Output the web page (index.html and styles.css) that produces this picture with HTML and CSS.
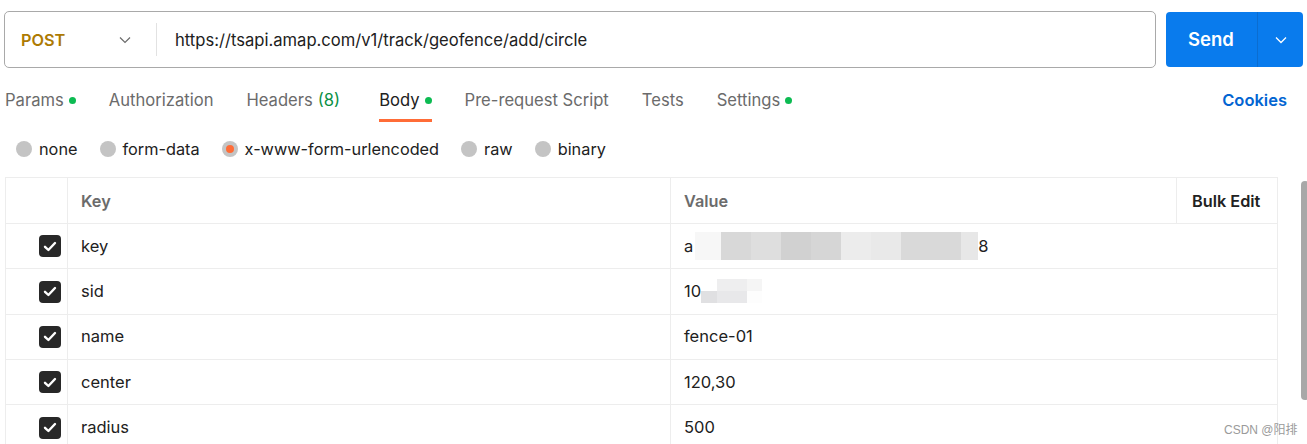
FILE: index.html
```html
<!DOCTYPE html>
<html lang="en">
<head>
<meta charset="utf-8">
<title>Request</title>
<link rel="stylesheet" href="styles.css">
</head>
<body>
<div class="page">
  <div class="topbar">
    <div class="urlbox">
      <div class="method">
        <span class="method-name">POST</span>
        <svg class="chev" width="12" height="8" viewBox="0 0 12 8"><path d="M1 1.5 L6 6.5 L11 1.5" fill="none" stroke="#6b6b6b" stroke-width="1.2"/></svg>
      </div>
      <div class="url">https://tsapi.amap.com/v1/track/geofence/add/circle</div>
    </div>
    <div class="send">
      <span class="send-label">Send</span>
      <span class="send-more"><svg width="12" height="8" viewBox="0 0 12 8"><path d="M1 1.5 L6 6.5 L11 1.5" fill="none" stroke="#ffffff" stroke-width="1.3"/></svg></span>
    </div>
  </div>

  <div class="tabs">
    <div class="tablist">
      <span class="tab">Params<i class="dot"></i></span>
      <span class="tab">Authorization</span>
      <span class="tab">Headers <span class="count">(8)</span></span>
      <span class="tab active">Body<i class="dot"></i></span>
      <span class="tab">Pre-request Script</span>
      <span class="tab">Tests</span>
      <span class="tab">Settings<i class="dot"></i></span>
    </div>
    <span class="cookies">Cookies</span>
  </div>

  <div class="radios">
    <label class="radio"><span class="circle"></span>none</label>
    <label class="radio"><span class="circle"></span>form-data</label>
    <label class="radio"><span class="circle on"></span>x-www-form-urlencoded</label>
    <label class="radio"><span class="circle"></span>raw</label>
    <label class="radio"><span class="circle"></span>binary</label>
  </div>

  <table class="kv">
    <colgroup>
      <col class="c-check"><col class="c-key"><col class="c-val"><col class="c-bulk">
    </colgroup>
    <thead>
      <tr><th></th><th class="h">Key</th><th class="h">Value</th><th class="bulk">Bulk Edit</th></tr>
    </thead>
    <tbody>
      <tr><td class="chk"><span class="box"><svg width="14" height="11" viewBox="0 0 14 11"><path d="M2 5.8 L5.4 9 L12 2" fill="none" stroke="#fff" stroke-width="2.4" stroke-linecap="round" stroke-linejoin="round"/></svg></span></td><td>key</td>
        <td colspan="2"><span class="val">a<span class="blur b1"></span><span class="blur b2"></span><span class="blur b3"></span><span class="blur b4"></span><span class="blur b5"></span><span class="blur b6"></span><span class="blur b7"></span><span class="blur b8"></span><span class="blur b9"></span>8</span></td></tr>
      <tr><td class="chk"><span class="box"><svg width="14" height="11" viewBox="0 0 14 11"><path d="M2 5.8 L5.4 9 L12 2" fill="none" stroke="#fff" stroke-width="2.4" stroke-linecap="round" stroke-linejoin="round"/></svg></span></td><td>sid</td>
        <td colspan="2"><span class="val">10<span class="blur2"><span class="q q1"></span><span class="q q2"></span><span class="q q3"></span><span class="q q4"></span><span class="q q5"></span><span class="q q6"></span></span></span></td></tr>
      <tr><td class="chk"><span class="box"><svg width="14" height="11" viewBox="0 0 14 11"><path d="M2 5.8 L5.4 9 L12 2" fill="none" stroke="#fff" stroke-width="2.4" stroke-linecap="round" stroke-linejoin="round"/></svg></span></td><td>name</td><td colspan="2">fence-01</td></tr>
      <tr><td class="chk"><span class="box"><svg width="14" height="11" viewBox="0 0 14 11"><path d="M2 5.8 L5.4 9 L12 2" fill="none" stroke="#fff" stroke-width="2.4" stroke-linecap="round" stroke-linejoin="round"/></svg></span></td><td>center</td><td colspan="2">120,30</td></tr>
      <tr><td class="chk"><span class="box"><svg width="14" height="11" viewBox="0 0 14 11"><path d="M2 5.8 L5.4 9 L12 2" fill="none" stroke="#fff" stroke-width="2.4" stroke-linecap="round" stroke-linejoin="round"/></svg></span></td><td>radius</td><td colspan="2">500</td></tr>
    </tbody>
  </table>

  <div class="scrollbar"></div>
  <div class="watermark">CSDN @阳排</div>
</div>
</body>
</html>
```

FILE: styles.css
```css
* { box-sizing: border-box; }
html, body { margin: 0; padding: 0; background: #fff; overflow: hidden; }
body {
  font-family: Inter, "Noto Sans CJK SC", sans-serif;
  color: #212121;
  width: 1307px;
  height: 444px;
}
.page { position: relative; width: 1307px; height: 444px; }

.topbar {
  display: flex;
  padding: 11px 4px 0 4px;
  gap: 10px;
  height: 68px;
}
.urlbox {
  width: 1152px;
  height: 57px;
  border: 1px solid #a9a9a9;
  border-radius: 5px;
  display: flex;
  align-items: center;
}
.method {
  width: 152px;
  display: flex;
  align-items: center;
  padding-left: 16px;
  height: 33px;
  border-right: 1px solid #e2e2e2;
}
.method-name {
  color: #ad7a03;
  font-weight: 600;
  font-size: 16.3px;
  width: 98px;
}
.chev { display: block; }
.url {
  padding-left: 18px;
  font-size: 16.6px;
  color: #212121;
}
.send {
  width: 137px;
  height: 55px;
  margin-top: 1px;
  background: #097bed;
  border-radius: 4px;
  display: flex;
  align-items: center;
  color: #fff;
}
.send-label {
  width: 92px;
  font-weight: 600;
  font-size: 18.5px;
  padding-left: 22px;
  height: 55px;
  line-height: 55px;
  border-right: 1px solid #0b6dd1;
}
.send-more {
  flex: 1;
  display: flex;
  justify-content: center;
}
.send-more svg { display: block; }

.tabs {
  display: flex;
  justify-content: space-between;
  align-items: flex-start;
  padding: 0 20px 0 5px;
  height: 55px;
}
.tablist { display: flex; }
.tab {
  font-size: 16.6px;
  color: #6b6b6b;
  height: 54px;
  line-height: 64px;
  margin-right: 33px;
  display: flex;
  align-items: flex-start;
  white-space: nowrap;
}
.tab .count { color: #0a8f45; margin-left: 5px; }
.tab.active { color: #212121; position: relative; margin-left: 6px; }
.tab.active::after {
  content: "";
  position: absolute;
  left: 0; right: 0;
  bottom: 0;
  height: 3px;
  background: #ff6c37;
}
.dot {
  width: 7px; height: 7px;
  border-radius: 50%;
  background: #0cbb52;
  margin: 29px 0 0 5px;
}
.cookies {
  color: #0265d2;
  font-weight: 600;
  font-size: 16.5px;
  line-height: 64px;
  height: 54px;
}

.radios {
  display: flex;
  align-items: center;
  height: 54px;
  padding-left: 16px;
  padding-bottom: 2px;
}
.radio {
  display: flex;
  align-items: center;
  font-size: 16.3px;
  color: #212121;
  margin-right: 22px;
}
.circle {
  width: 16px; height: 16px;
  border-radius: 50%;
  background: #c4c4c4;
  margin-right: 7px;
  display: inline-flex;
  align-items: center;
  justify-content: center;
}
.circle.on::after {
  content: "";
  width: 8px; height: 8px;
  border-radius: 50%;
  background: #ff6c37;
}

.kv {
  margin-left: 5px;
  border-collapse: collapse;
  width: 1272px;
  table-layout: fixed;
  font-size: 16.5px;
}
.c-check { width: 62px; }
.c-key { width: 603px; }
.c-val { width: 506px; }
.c-bulk { width: 101px; }
.kv th, .kv td {
  border: 1px solid #ededed;
  padding: 0 0 0 13px;
  text-align: left;
}
.kv th { height: 46px; font-weight: 600; font-size: 16.3px; }
.kv td { height: 45.3px; color: #212121; padding-bottom: 1px; }
.kv th.h { color: #6b6b6b; }
.kv th.bulk { color: #212121; padding-left: 15px; }
.kv td.chk { padding: 0 6px 0 0; text-align: right; }
.box {
  display: inline-flex;
  width: 22px; height: 22px;
  border-radius: 4px;
  background: #282828;
  align-items: center;
  justify-content: center;
  vertical-align: middle;
}
.box svg { display: block; }
.val { display: inline-flex; align-items: center; }
.blur { display: inline-block; height: 28px; width: 30px; }
.b1 { width: 26px; background: #f7f7f7; margin-left: 2px; }
.b2 { background: #d8d8d8; }
.b3 { background: #dedede; }
.b4 { background: #d1d1d1; }
.b5 { background: #d6d6d6; }
.b6 { background: #ececec; }
.b7 { background: #e9e9e9; }
.b8 { background: #d9d9d9; width: 60px; }
.b9 { background: #e7e7e7; width: 17px; }
.blur2 {
  display: inline-grid;
  grid-template-columns: 16px 30px 15px;
  grid-template-rows: 12px 12px;
}
.q1 { background: #fff; }
.q2 { background: #eeeeef; }
.q3 { background: #f5f5f5; }
.q4 { background: #e0e0e2; }
.q5 { background: #e8e8ea; }
.q6 { background: #fdfdfd; }

.scrollbar {
  position: absolute;
  left: 1301px;
  top: 181px;
  width: 8px;
  height: 219px;
  border-radius: 4px;
  background: #a8a8a8;
}
.watermark {
  position: absolute;
  left: 1224px;
  top: 420px;
  font-size: 12px;
  color: #9a9a9a;
  font-family: "Liberation Sans", "Noto Sans CJK SC", sans-serif;
}
```
